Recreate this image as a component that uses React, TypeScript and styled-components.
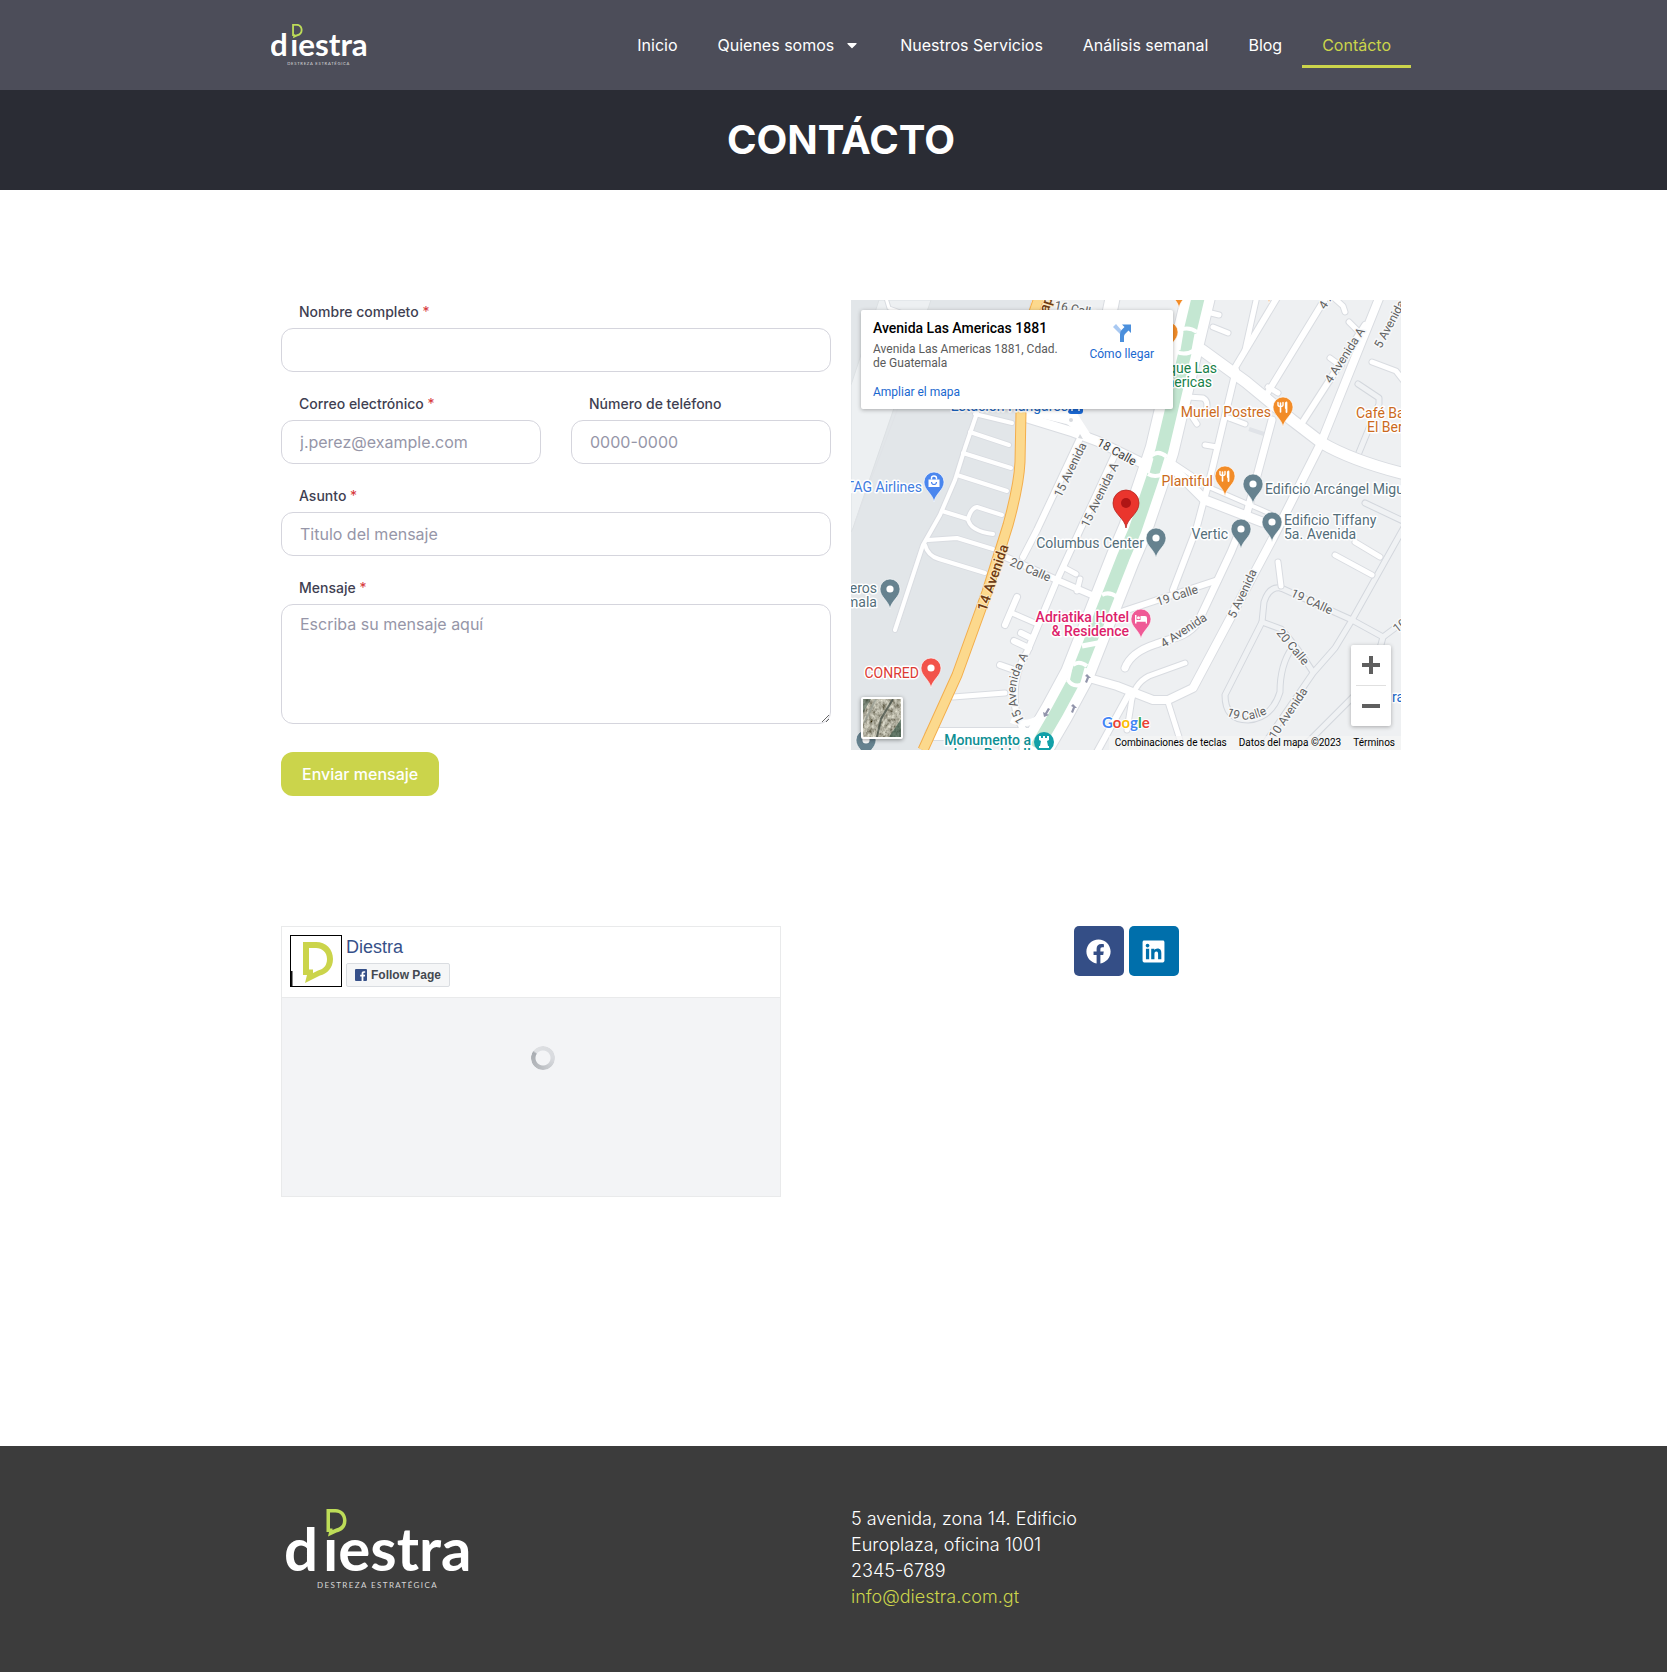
import React, { useId } from 'react';
import styled, { createGlobalStyle } from 'styled-components';
import { FaCaretDown, FaFacebook, FaLinkedin } from 'react-icons/fa';

const lime = '#cbd44b';
const sans = `Inter, 'Liberation Sans', sans-serif`;
const mapFont = `Roboto, 'Liberation Sans', sans-serif`;

const GlobalStyle = createGlobalStyle`
  *, *::before, *::after { box-sizing: border-box; }
  body {
    margin: 0;
    background: #fff;
    color: #3f3f52;
    font-family: ${sans};
    font-size: 16px;
    line-height: 24px;
  }
  a { color: inherit; text-decoration: none; }
`;

/* ---------- Shared layout ---------- */

const Band = styled.div<{ $bg?: string }>`
  padding-left: 15px;
  background: ${(p) => p.$bg ?? 'transparent'};
`;

const Container = styled.div`
  width: 100%;
  max-width: 1140px;
  margin: 0 auto;
`;

const Columns = styled(Container)`
  display: grid;
  grid-template-columns: repeat(2, minmax(0, 1fr));
  align-items: start;

  @media (max-width: 767px) {
    grid-template-columns: minmax(0, 1fr);
  }
`;

const Column = styled.div`
  padding: 0 10px;
`;

/* ---------- Header ---------- */

const HeaderRow = styled(Container)`
  display: flex;
  align-items: center;
  justify-content: space-between;
  flex-wrap: wrap;
  min-height: 90px;
`;

const LogoLink = styled.a`
  display: block;
  line-height: 0;
`;

const NavList = styled.ul`
  display: flex;
  flex-wrap: wrap;
  margin: 0;
  padding: 0;
  list-style: none;
`;

const NavLink = styled.a<{ $active?: boolean }>`
  display: flex;
  align-items: center;
  gap: 10px;
  padding: 13px 20px 10px;
  border-bottom: 3px solid ${(p) => (p.$active ? lime : 'transparent')};
  color: ${(p) => (p.$active ? lime : '#fff')};
  line-height: 20px;
`;

const PageTitle = styled.h1`
  margin: 0;
  padding: 25px 0;
  color: #fff;
  font-size: 40px;
  font-weight: 700;
  line-height: 50px;
  text-align: center;
`;

/* ---------- Contact form ---------- */

const Main = styled.main`
  display: grid;
  gap: 130px;
  padding: 110px 0 20px;
`;

const Form = styled.form`
  display: grid;
  grid-template-columns: repeat(2, minmax(0, 1fr));
  gap: 20px 30px;
`;

const Field = styled.div<{ $half?: boolean }>`
  display: flex;
  flex-direction: column;
  gap: 4px;
  grid-column: ${(p) => (p.$half ? 'auto' : '1 / -1')};
`;

const Label = styled.label`
  padding-left: 18px;
  font-size: 14px;
  font-weight: 500;
  line-height: 24px;
`;

const Required = styled.span`
  color: #d63638;
  font-weight: 400;
`;

const Input = styled.input`
  width: 100%;
  height: 44px;
  padding: 0 18px;
  border: 1px solid #d5d5dd;
  border-radius: 12px;
  background: #fff;
  color: inherit;
  font: 16px/24px ${sans};

  &::placeholder { color: #9696a8; opacity: 1; }
`;

const TextArea = styled(Input)`
  display: block;
  height: 120px;
  padding: 7px 18px;
  resize: vertical;
`;

const SubmitRow = styled.div`
  grid-column: 1 / -1;
  padding-top: 8px;
`;

const Submit = styled.button`
  height: 44px;
  padding: 0 21px;
  border: 0;
  border-radius: 12px;
  background: ${lime};
  color: #fff;
  font: 500 16px/24px ${sans};
  cursor: pointer;
`;

/* ---------- Map ---------- */

const MapFrame = styled.section`
  position: relative;
  height: 450px;
  overflow: hidden;
  background: #eef0f2;
  font-family: ${mapFont};
`;

const MapCanvas = styled.svg`
  display: block;
  width: 100%;
  height: 100%;
`;

const PlaceCard = styled.div`
  position: absolute;
  top: 10px;
  left: 10px;
  display: flex;
  justify-content: space-between;
  width: 312px;
  padding: 10px 19px 10px 12px;
  border-radius: 2px;
  background: #fff;
  box-shadow: 0 1px 4px rgba(0, 0, 0, 0.3);
  color: #5b5b5b;
  font-size: 12px;
  line-height: 14px;
`;

const PlaceName = styled.strong`
  display: block;
  margin-bottom: 6px;
  color: #000;
  font-size: 14px;
  font-weight: 500;
  line-height: 16px;
`;

const PlaceAddress = styled.p`
  width: 192px;
  margin: 0 0 15px;
`;

const MapLink = styled.a`
  color: #1a68cf;
`;

const Directions = styled(MapLink)`
  display: flex;
  flex-direction: column;
  align-items: center;
  gap: 4px;
  padding-top: 3px;
`;

const ZoomBox = styled.div`
  position: absolute;
  right: 10px;
  bottom: 24px;
  display: flex;
  flex-direction: column;
  width: 40px;
  border-radius: 2px;
  background: #fff;
  box-shadow: 0 1px 4px rgba(0, 0, 0, 0.3);
`;

const ZoomButton = styled.button`
  display: flex;
  align-items: center;
  justify-content: center;
  height: 40px;
  padding: 0;
  border: 0;
  background: none;
  cursor: pointer;
`;

const ZoomDivider = styled.div`
  height: 1px;
  margin: 0 5px;
  background: #e0e0e0;
`;

const SatelliteButton = styled.button`
  position: absolute;
  left: 10px;
  bottom: 11px;
  width: 42px;
  height: 42px;
  padding: 0;
  overflow: hidden;
  border: 2px solid #fff;
  border-radius: 2px;
  background: #555b4d;
  box-shadow: 0 1px 4px rgba(0, 0, 0, 0.4);
  cursor: pointer;
`;

const MapCredits = styled.div`
  position: absolute;
  right: 0;
  bottom: 0;
  display: flex;
  gap: 12px;
  padding: 0 6px;
  background: rgba(245, 245, 245, 0.7);
  color: #000;
  font-size: 10px;
  line-height: 14px;
`;

const CreditButton = styled.button`
  padding: 0;
  border: 0;
  background: none;
  color: inherit;
  font: inherit;
`;

/* Airport side service lanes and city streets: [path, width] */
const streets: [string, number][] = [
  ['M187 -4 L183 2 L170 60', 5],
  ['M126 113 L114 148 L104 180 L89 215 L72 245 L44 330', 4],
  ['M124 114 L161 123', 4],
  ['M119 132 L158 145', 4],
  ['M112 153 L160 168', 4],
  ['M106 175 L156 191', 4],
  ['M91 211 L117 219', 4],
  ['M151 215 L126 207 Q120 208 117 219 Q119 231 142 234', 4],
  ['M77 240 L106 238 L142 249', 4],
  ['M74 245 Q77 256 88 259 L134 273', 4],
  ['M102 397 L154 393', 5],
  ['M80 434 H180', 12],
  ['M170 116 L222 132 L246 141 L291 163 L324 170 L354 200 L411 222', 9],
  ['M318 160 L360 188 L420 214', 4],
  ['M351 50 L395 82 L441 120 L471 143 Q500 160 550 173', 11],
  ['M427 -4 L385 66', 6],
  ['M406 -4 L394 50', 5],
  ['M385 70 L361 170 L345 230 L322 290', 6],
  ['M477 -6 L414 97', 6],
  ['M482 -3 L492 6 L494 12', 5],
  ['M514 25 L451 123', 6],
  ['M498 22 L506 30', 5],
  ['M479 58 L490 66', 5],
  ['M529 -4 L470 143 L422 238 L342 388 L317 400 L302 400 L266 386 L238 378', 8],
  ['M421 120 L396 213 L380 252 L347 322 C335 338 320 338 305 344 Q280 352 274 368', 7],
  ['M334 363 L298 376 Q282 384 280 405 L276 430', 5],
  ['M317 402 L329 440', 5],
  ['M279 392 L246 452', 6],
  ['M270 312 L367 280', 6],
  ['M150 255 L206 280 L250 299', 6],
  ['M232 132 L186 230 L172 257', 6],
  ['M266 150 L229 230 L206 280 L176 352 Q158 380 166 418 L176 436', 6],
  ['M166 297 L154 325', 6],
  ['M161 313 L184 323', 5],
  ['M163 341 L178 348', 6],
  ['M170 333 L178 337', 6],
  ['M149 365 L166 371', 6],
  ['M212 267 L225 274', 5],
  ['M229 279 L226 291', 5],
  ['M521 62 L545 71 L552 80', 5],
  ['M362 27 L377 33', 5],
  ['M360 13 L368 15', 5],
  ['M337 97 L352 98 Q358 101 355 110', 5],
  ['M342 118 L346 124', 5],
  ['M378 118 L394 124', 5],
  ['M354 145 L366 147', 5],
  ['M417 87 L427 93', 5],
  ['M427 262 L430 286', 5],
  ['M484 255 L521 275', 5],
  ['M504 242 L529 257', 5],
  ['M35 -2 L38 8 L52 13', 3],
  ['M262 -4 L255 30', 14],
];

const quietLanes = [
  'M430 288 L501 320 L532 337 L552 322',
  'M532 337 L528 352',
  'M430 288 Q418 286 413 302 L411 322 L374 395 Q374 420 397 420 Q421 418 429 392 Q429 365 441 348',
  'M411 322 L430 329 Q444 344 462 372',
  'M556 222 L501 320 L484 348 L462 373 L412 446',
  'M507 392 L455 444',
  'M507 84 L528 98 L528 104 L507 155',
  'M514 203 L552 221',
];

const avenue = 'M348 -6 L337 40 L311 150 L301 180 L284 230 L272 258 L239 342 L226 375 L206 412 L185 448';
const yellowRoad = 'M192 -14 L181 18 L170 112 L169 162 Q168 185 157 225 L136 292 L106 375 L72 450';

const roadLabels: { t: string; x: number; y: number; r: number; strong?: boolean }[] = [
  { t: '16 Calle', x: 203, y: 9, r: 11 },
  { t: '15 Avenida', x: 210, y: 198, r: -64 },
  { t: '15 Avenida A', x: 237, y: 228, r: -64 },
  { t: '18 Calle', x: 245, y: 145, r: 29, strong: true },
  { t: '20 Calle', x: 158, y: 265, r: 23 },
  { t: '19 Calle', x: 307, y: 306, r: -18 },
  { t: '4 Avenida', x: 313, y: 348, r: -33 },
  { t: '5 Avenida', x: 384, y: 319, r: -65 },
  { t: '19 CAlle', x: 439, y: 296, r: 25 },
  { t: '20 Calle', x: 425, y: 333, r: 50 },
  { t: '10 Avenida', x: 424, y: 440, r: -56 },
  { t: '10 Avenida', x: 546, y: 333, r: -38 },
  { t: '4 Avenida A', x: 480, y: 84, r: -57 },
  { t: '4 Avenida', x: 474, y: 10, r: -57 },
  { t: '5 Avenida', x: 530, y: 49, r: -62 },
];

const orange = '#cb6a20';
const slate = '#546e7a';

const places: { t: string; x: number; y: number; c: string; end?: boolean; bold?: boolean }[] = [
  { t: 'Muriel Postres', x: 420, y: 117, c: orange, end: true },
  { t: 'Plantiful', x: 362, y: 186, c: orange, end: true },
  { t: 'Café Ba', x: 505, y: 118, c: orange },
  { t: 'El Ber', x: 516, y: 132, c: orange },
  { t: 'Parque Las', x: 366, y: 73, c: '#178048', end: true },
  { t: 'Americas', x: 361, y: 87, c: '#178048', end: true },
  { t: 'Estación Hangares', x: 217, y: 111, c: '#1967c8', end: true },
  { t: 'TAG Airlines', x: 71, y: 192, c: '#3f7de0', end: true },
  { t: 'Edificio Arcángel Miguel', x: 414, y: 194, c: slate },
  { t: 'Edificio Tiffany', x: 433, y: 225, c: slate },
  { t: '5a. Avenida', x: 433, y: 239, c: slate },
  { t: 'Vertic', x: 377, y: 239, c: slate, end: true },
  { t: 'Columbus Center', x: 293, y: 248, c: slate, end: true },
  { t: 'Bomberos', x: 26, y: 293, c: slate, end: true },
  { t: 'Guatemala', x: 26, y: 307, c: slate, end: true },
  { t: 'CONRED', x: 68, y: 378, c: '#dc3a33', end: true },
  { t: 'Adriatika Hotel', x: 278, y: 322, c: '#dd1f6b', end: true, bold: true },
  { t: '& Residence', x: 278, y: 336, c: '#dd1f6b', end: true, bold: true },
  { t: 'Monumento a', x: 180, y: 445, c: '#0e8f94', end: true, bold: true },
  { t: 'Juan Pablo II', x: 180, y: 459, c: '#0e8f94', end: true, bold: true },
  { t: 'ra', x: 541, y: 402, c: '#1967c8' },
];

type PinKind = 'dot' | 'food' | 'bag' | 'bed';

const pins: { x: number; y: number; c: string; k: PinKind }[] = [
  { x: 328, y: -12, c: '#f28c28', k: 'food' },
  { x: 317, y: 32, c: '#f28c28', k: 'food' },
  { x: 418, y: -17, c: '#f28c28', k: 'food' },
  { x: 432, y: 107, c: '#f28c28', k: 'food' },
  { x: 374, y: 176, c: '#f28c28', k: 'food' },
  { x: 402, y: 184, c: '#66828f', k: 'dot' },
  { x: 421, y: 222, c: '#66828f', k: 'dot' },
  { x: 390, y: 229, c: '#66828f', k: 'dot' },
  { x: 305, y: 238, c: '#66828f', k: 'dot' },
  { x: 39, y: 289, c: '#66828f', k: 'dot' },
  { x: 15, y: 440, c: '#66828f', k: 'dot' },
  { x: 80, y: 368, c: '#f2534b', k: 'dot' },
  { x: 83, y: 182, c: '#4a86ee', k: 'bag' },
  { x: 290, y: 319, c: '#ef5a96', k: 'bed' },
];

function Pin({ x, y, c, k }: { x: number; y: number; c: string; k: PinKind }) {
  return (
    <g transform={`translate(${x} ${y})`}>
      <path d="M0 20 C-1 12 -10 8 -10 0 A10 10 0 0 1 10 0 C10 8 1 12 0 20Z" fill={c} stroke="#fff" strokeWidth="0.6" />
      {k === 'dot' && <circle r="3.6" fill="#fff" />}
      {k === 'food' && (
        <g stroke="#fff" fill="none" strokeLinecap="round">
          <path d="M-2.5 -4 V5" strokeWidth="1.6" />
          <path d="M-5 -4.5 V-2 Q-5 -0.5 -2.5 -0.5 Q0 -0.5 0 -2 V-4.5" strokeWidth="1.4" />
          <path d="M3.5 5 V-4.5 M2.8 -4 V1" strokeWidth="1.8" />
        </g>
      )}
      {k === 'bag' && (
        <g>
          <path d="M-5.5 -2.5 H5.5 V5 H-5.5Z" fill="#fff" />
          <path d="M-2.5 -2.5 V-4 A2.5 2 0 0 1 2.5 -4 V-2.5" fill="none" stroke="#fff" strokeWidth="1.4" />
          <path d="M-2.5 0 A2.5 2.5 0 0 0 2.5 0" fill="none" stroke={c} strokeWidth="1.2" />
        </g>
      )}
      {k === 'bed' && (
        <path d="M-6 -4 H-4.5 V1 H-0.5 V-3 H4 Q6 -3 6 -1 V4.5 H4.7 V2.8 H-4.5 V4.5 H-6Z M-4 -1.2 a1.5 1.5 0 1 0 3 0 a1.5 1.5 0 1 0 -3 0" fill="#fff" />
      )}
    </g>
  );
}

function MapDrawing() {
  return (
    <MapCanvas viewBox="0 0 550 450" preserveAspectRatio="xMidYMid slice" aria-hidden="true">
      <rect width="550" height="450" fill="#eef0f2" />
      <path d="M0 0 H187 L170 112 L169 160 L157 225 L136 292 L106 375 L72 450 H0Z" fill="#e2e6e9" />
      <path d="M28 0 H80 L43 108 L2 228 L0 232 V85Z" fill="#edf0f2" stroke="#dce0e3" />
      <path d="M50 100 L4 222" stroke="#e0e3e7" fill="none" />
      <path d="M398 129 L413 134" stroke="#e0e3e8" strokeWidth="4" />

      <g fill="none" strokeLinejoin="round" strokeLinecap="round">
        {quietLanes.map((d) => (
          <path key={d} d={d} stroke="#d3d7dd" strokeWidth="7" />
        ))}
        {quietLanes.map((d) => (
          <path key={d} d={d} stroke="#f0f2f4" strokeWidth="5" />
        ))}
        {streets.map(([d, w]) => (
          <path key={d} d={d} stroke="#d9dce1" strokeWidth={w + 2} />
        ))}
        <path d={avenue} stroke="#d9dce1" strokeWidth="35" />
        {streets.map(([d, w]) => (
          <path key={d} d={d} stroke="#fff" strokeWidth={w} />
        ))}
        <path d={avenue} stroke="#fff" strokeWidth="33" />
      </g>

      <g fill="none">
        <path d={avenue} stroke="#c4e7d2" strokeWidth="13" />
        <g stroke="#fff" strokeWidth="4">
          <path d="M328 30 Q338 26 346 32 M326 52 Q334 56 344 50" />
          <path d="M301 155 Q308 150 316 157 M297 174 Q304 178 312 174" />
          <path d="M251 295 Q258 291 266 297" />
          <path d="M231 346 L252 342" strokeWidth="5" />
          <path d="M222 365 Q228 360 236 366 M217 380 Q221 387 230 385" />
        </g>
        <g stroke="#fff" strokeWidth="3">
          <path d="M331 32 L328 50 M301 158 L297 173 M220 368 L217 382" />
          <path d="M345 34 L342 50 M315 158 L310 174 M235 368 L231 383" />
        </g>
        <path d="M160 420 Q185 430 198 405" stroke="#fff" strokeWidth="6" />
        <path d="M164 107 H222 L240 135 L236 140 L216 124 L172 114Z" fill="#fff" />
        <path d={yellowRoad} stroke="#f3ae4c" strokeWidth="11" />
        <path d={yellowRoad} stroke="#fcd98d" strokeWidth="9" />
      </g>

      <g fill="#9295ab">
        <path d="M236 374 l4 4 h-2 l-2 5 l-2 -1 l2 -5 l-2 -1z" />
        <path d="M222 404 l4 4 h-2 l-2 5 l-2 -1 l2 -5 l-2 -1z" />
        <path d="M193 417 l-1 -5 l2 1 l3 -5 l2 1 l-3 5 l2 1z" />
      </g>
      <circle cx="220" cy="120" r="2" fill="#d7dade" />
      <path d="M229 134 l3 5 l-5 -1z" fill="#d7dade" />

      <g fontSize="12" fill="#606060" stroke="#f7f8f9" strokeWidth="3" paintOrder="stroke" strokeLinejoin="round">
        {roadLabels.map((l) => (
          <text
            key={`${l.t}-${l.x}`}
            transform={`translate(${l.x} ${l.y}) rotate(${l.r})`}
            fill={l.strong ? '#3c3c3c' : '#606060'}
          >
            {l.t}
          </text>
        ))}
        <path id="lower-15-avenida" d="M174 421 C159 395 163 380 180 351" fill="none" stroke="none" />
        <path id="lower-19-calle" d="M375 415 Q396 426 421 411" fill="none" stroke="none" />
        <text><textPath href="#lower-15-avenida">15 Avenida A</textPath></text>
        <text><textPath href="#lower-19-calle">19 Calle</textPath></text>
      </g>
      <g fill="#6e3a12" stroke="#fde7bb" strokeWidth="2" paintOrder="stroke" fontWeight="500" fontSize="14">
        <text transform="translate(135 312) rotate(-71)">14 Avenida</text>
        <text transform="translate(197 13) rotate(-72)">ap</text>
      </g>

      {pins.map((p) => (
        <Pin key={`${p.x}-${p.y}`} {...p} />
      ))}
      <rect x="217" y="99" width="15" height="15" rx="3" fill="#1967d2" />
      <path d="M221 111 V104 H228 V111 M221 108 H228" stroke="#fff" strokeWidth="1.5" fill="none" />
      <circle cx="193" cy="442" r="10" fill="#12a0a8" />
      <path d="M188 436 h2 v2 h2 v-2 h2 v2 h2 v-2 h2 v4 l-2 1 l1 5 h1 v2 h-10 v-2 h1 l1 -5 l-2 -1z" fill="#fff" />
      <g transform="translate(275 203)">
        <path d="M0 25 C-1 15 -13 11 -13 0 A13 13 0 0 1 13 0 C13 11 1 15 0 25Z" fill="#ea352d" stroke="#b5261f" strokeWidth="0.8" />
        <circle r="5" fill="#b01515" />
      </g>

      <g fontSize="14" stroke="#fff" strokeWidth="3" paintOrder="stroke" strokeLinejoin="round">
        {places.map((p) => (
          <text key={p.t} x={p.x} y={p.y} fill={p.c} textAnchor={p.end ? 'end' : 'start'} fontWeight={p.bold ? 500 : 400}>
            {p.t}
          </text>
        ))}
      </g>

      <text x="251" y="428" fontFamily="Lato, sans-serif" fontSize="15" fontWeight="700" stroke="#fff" strokeWidth="2" paintOrder="stroke">
        <tspan fill="#4285f4">G</tspan>
        <tspan fill="#ea4335">o</tspan>
        <tspan fill="#fbbc04">o</tspan>
        <tspan fill="#4285f4">g</tspan>
        <tspan fill="#34a853">l</tspan>
        <tspan fill="#ea4335">e</tspan>
      </text>
    </MapCanvas>
  );
}

function SatelliteThumb() {
  return (
    <svg width="38" height="38" viewBox="0 0 38 38" aria-hidden="true">
      <filter id="terrain" x="0" y="0" width="100%" height="100%">
        <feTurbulence type="fractalNoise" baseFrequency="0.3 0.2" numOctaves="4" seed="11" />
        <feColorMatrix values="1 0.2 0 0 -0.16  1 0.2 0 0 -0.17  0.9 0.2 0 0 -0.2  0 0 0 0 1" />
      </filter>
      <rect width="38" height="38" filter="url(#terrain)" />
      <path d="M30 0 L18 20 L14 38" stroke="#39433a" strokeWidth="2" fill="none" opacity="0.7" />
      <path d="M13 0 L1 24" stroke="#8d938a" strokeWidth="2" opacity="0.6" />
      <path d="M26 38 L38 20 V38Z" fill="#26493a" opacity="0.6" />
      <path d="M0 0 H8 L0 14Z" fill="#2f4a3c" opacity="0.5" />
    </svg>
  );
}

function LocationMap() {
  return (
    <MapFrame aria-label="Mapa">
      <MapDrawing />
      <PlaceCard>
        <div>
          <PlaceName>Avenida Las Americas 1881</PlaceName>
          <PlaceAddress>Avenida Las Americas 1881, Cdad. de Guatemala</PlaceAddress>
          <MapLink href="#mapa">Ampliar el mapa</MapLink>
        </div>
        <Directions href="#llegar">
          <svg width="20" height="20" viewBox="0 0 20 20" aria-hidden="true">
            <path d="M1 4 L4 1 L10 8 L8 11Z" fill="#a9c9f2" />
            <path d="M8 19 V11 Q8 8 10 6.5 L12.5 4 L10 1.5 H19 V10 L16.5 7.5 L13 11 Q12 12 12 13.5 V19Z" fill="#4b8fdc" />
          </svg>
          Cómo llegar
        </Directions>
      </PlaceCard>
      <SatelliteButton type="button" aria-label="Vista satélite">
        <SatelliteThumb />
      </SatelliteButton>
      <ZoomBox>
        <ZoomButton type="button" aria-label="Acercar">
          <svg width="18" height="18" viewBox="0 0 18 18"><path d="M9 0 V18 M0 9 H18" stroke="#5f5f5f" strokeWidth="4" /></svg>
        </ZoomButton>
        <ZoomDivider />
        <ZoomButton type="button" aria-label="Alejar">
          <svg width="18" height="18" viewBox="0 0 18 18"><path d="M0 9 H18" stroke="#5f5f5f" strokeWidth="4" /></svg>
        </ZoomButton>
      </ZoomBox>
      <MapCredits>
        <CreditButton type="button">Combinaciones de teclas</CreditButton>
        <span>Datos del mapa ©2023</span>
        <a href="#terminos">Términos</a>
      </MapCredits>
    </MapFrame>
  );
}

/* ---------- Brand ---------- */

function Logo({ width }: { width: number }) {
  const clip = useId();
  return (
    <svg width={width} viewBox="0 0 184 82" role="img" aria-label="diestra">
      {/* The speech bubble stands in for the dot of the i */}
      <clipPath id={clip}>
        <path d="M-4 0 H34 V29 H52 V0 H190 V82 H-4Z" />
      </clipPath>
      <path
        fillRule="evenodd"
        fill="#bddc58"
        d="M40.5 0 H49.5 C56 0 60.5 5 60.5 11.5 C60.5 18 57 22 50.5 23.5 L42 27.5 L43 23 H40.5Z M44 3.5 V19.5 H46.5 V21 L50 19.5 C54.5 18.5 57 16 57 11.5 C57 7 54 3.5 49.5 3.5Z"
      />
      <text x="-2" y="62" clipPath={`url(#${clip})`} fill="#fff" fontFamily="Lato, sans-serif" fontSize="60" fontWeight="700">
        d<tspan dx="5">iestra</tspan>
      </text>
      <text x="31" y="79" fill="#d8d8d8" fontFamily="Lato, sans-serif" fontSize="8" letterSpacing="1.4">DESTREZA ESTRATÉGICA</text>
    </svg>
  );
}

/* ---------- Social ---------- */

const WidgetArea = styled.div`
  min-height: 500px;
`;

const PageWidget = styled.section`
  max-width: 500px;
  border: 1px solid #e9eaeb;
  background: #f3f4f6;
  font-family: 'Liberation Sans', Arial, sans-serif;
`;

const WidgetHeader = styled.div`
  display: flex;
  gap: 4px;
  padding: 8px 8px 10px;
  border-bottom: 1px solid #e9eaeb;
  background: #fff;
`;

const Avatar = styled.svg`
  display: block;
  width: 52px;
  height: 52px;
  border: 1px solid #000;
`;

const WidgetInfo = styled.div`
  display: flex;
  flex-direction: column;
  align-items: flex-start;
  justify-content: space-between;
`;

const WidgetName = styled.a`
  color: #365089;
  font-size: 18px;
  line-height: 24px;
`;

const FollowButton = styled.button`
  display: flex;
  align-items: center;
  gap: 4px;
  height: 24px;
  padding: 0 8px;
  border: 1px solid #dadde1;
  border-radius: 2px;
  background: #f5f6f7;
  color: #444950;
  font: bold 12px/22px 'Liberation Sans', Arial, sans-serif;
  cursor: pointer;
`;

const WidgetBody = styled.div`
  display: flex;
  justify-content: center;
  height: 198px;
  padding: 48px 0 0 24px;
`;

const Spinner = styled.div`
  width: 24px;
  height: 24px;
  border-radius: 50%;
  background: conic-gradient(#dcdee1 0deg, #d9dbdf 90deg, #b9bcc0 200deg, #a9adb2 300deg, #dfe1e4 310deg, #dcdee1 360deg);
  mask: radial-gradient(circle, transparent 7px, #000 8px);
`;

const SocialList = styled.div`
  display: flex;
  justify-content: center;
  gap: 5px;
`;

const SocialLink = styled.a<{ $color: string }>`
  display: flex;
  align-items: center;
  justify-content: center;
  width: 50px;
  height: 50px;
  border-radius: 5px;
  background: ${(p) => p.$color};
  color: #fff;
`;

/* ---------- Footer ---------- */

const FooterColumns = styled(Columns)`
  padding: 60px 0 62px;
`;

const FooterBrand = styled.div`
  padding: 3px 5px;
  line-height: 0;
`;

const Address = styled.address`
  color: #fff;
  font-size: 18px;
  font-style: normal;
  font-weight: 300;
  line-height: 26px;
`;

const MailLink = styled.a`
  color: ${lime};
`;

/* ---------- Page ---------- */

const navItems = [
  { label: 'Inicio' },
  { label: 'Quienes somos', menu: true },
  { label: 'Nuestros Servicios' },
  { label: 'Análisis semanal' },
  { label: 'Blog' },
  { label: 'Contácto', active: true },
];

function FieldLabel({ id, text, required }: { id: string; text: string; required?: boolean }) {
  return (
    <Label htmlFor={id}>
      {text} {required && <Required>*</Required>}
    </Label>
  );
}

function ContactForm() {
  return (
    <Form onSubmit={(e) => e.preventDefault()}>
      <Field>
        <FieldLabel id="nombre" text="Nombre completo" required />
        <Input id="nombre" type="text" required />
      </Field>
      <Field $half>
        <FieldLabel id="correo" text="Correo electrónico" required />
        <Input id="correo" type="email" placeholder="j.perez@example.com" required />
      </Field>
      <Field $half>
        <FieldLabel id="telefono" text="Número de teléfono" />
        <Input id="telefono" type="tel" placeholder="0000-0000" />
      </Field>
      <Field>
        <FieldLabel id="asunto" text="Asunto" required />
        <Input id="asunto" type="text" placeholder="Titulo del mensaje" required />
      </Field>
      <Field>
        <FieldLabel id="mensaje" text="Mensaje" required />
        <TextArea as="textarea" id="mensaje" placeholder="Escriba su mensaje aquí" required />
      </Field>
      <SubmitRow>
        <Submit type="submit">Enviar mensaje</Submit>
      </SubmitRow>
    </Form>
  );
}

function FollowIcon() {
  return (
    <svg width="12" height="12" viewBox="0 0 12 12" aria-hidden="true">
      <rect width="12" height="12" rx="1" fill="#365089" />
      <path d="M6.6 12 V7.4 H5.2 V5.7 H6.6 V4.4 C6.6 3 7.5 2.2 8.8 2.2 H10.200 V3.8 H9.200 C8.600 3.8 8.400 4.1 8.400 4.6 V5.7 H10.100 L9.900 7.4 H8.400 V12Z" fill="#fff" />
    </svg>
  );
}

export default function App() {
  return (
    <>
      <GlobalStyle />
      <header>
        <Band $bg="#4c4d59">
          <HeaderRow>
            <LogoLink href="#inicio"><Logo width={96} /></LogoLink>
            <nav>
              <NavList>
                {navItems.map((item) => (
                  <li key={item.label}>
                    <NavLink href="#" $active={item.active}>
                      {item.label}
                      {item.menu && <FaCaretDown size={16} aria-hidden="true" />}
                    </NavLink>
                  </li>
                ))}
              </NavList>
            </nav>
          </HeaderRow>
        </Band>
        <Band $bg="#2a2c34">
          <Container><PageTitle>CONTÁCTO</PageTitle></Container>
        </Band>
      </header>

      <Band>
        <Main>
          <Columns>
            <Column><ContactForm /></Column>
            <Column><LocationMap /></Column>
          </Columns>
          <Columns>
            <Column>
              <WidgetArea>
                <PageWidget aria-label="Facebook">
                  <WidgetHeader>
                    <Avatar viewBox="0 0 50 50" aria-hidden="true">
                      <path
                        fill="#cbd44b"
                        fillRule="evenodd"
                        d="M12 6 H25 C35 6 42 13 42 23 C42 32 36 38 29 39.5 L14 47 L16 39 H12Z M18 12 V33.5 H22 V37 L27 34.5 C33 33 36 29 36 23 C36 16 31 12 25 12Z"
                      />
                      <rect x="0" y="35" width="1.5" height="15" fill="#111" />
                    </Avatar>
                    <WidgetInfo>
                      <WidgetName href="#diestra">Diestra</WidgetName>
                      <FollowButton type="button">
                        <FollowIcon />
                        Follow Page
                      </FollowButton>
                    </WidgetInfo>
                  </WidgetHeader>
                  <WidgetBody><Spinner role="status" /></WidgetBody>
                </PageWidget>
              </WidgetArea>
            </Column>
            <Column>
              <SocialList>
                <SocialLink href="#facebook" $color="#344e86" aria-label="Facebook"><FaFacebook size={25} /></SocialLink>
                <SocialLink href="#linkedin" $color="#006fab" aria-label="LinkedIn"><FaLinkedin size={25} /></SocialLink>
              </SocialList>
            </Column>
          </Columns>
        </Main>
      </Band>

      <footer>
        <Band $bg="#3c3c3c">
          <FooterColumns>
            <Column>
              <FooterBrand><Logo width={184} /></FooterBrand>
            </Column>
            <Column>
              <Address>
                5 avenida, zona 14. Edificio
                <br />
                Europlaza, oficina 1001
                <br />
                2345-6789
                <br />
                <MailLink href="mailto:info@diestra.com.gt">info@diestra.com.gt</MailLink>
              </Address>
            </Column>
          </FooterColumns>
        </Band>
      </footer>
    </>
  );
}
